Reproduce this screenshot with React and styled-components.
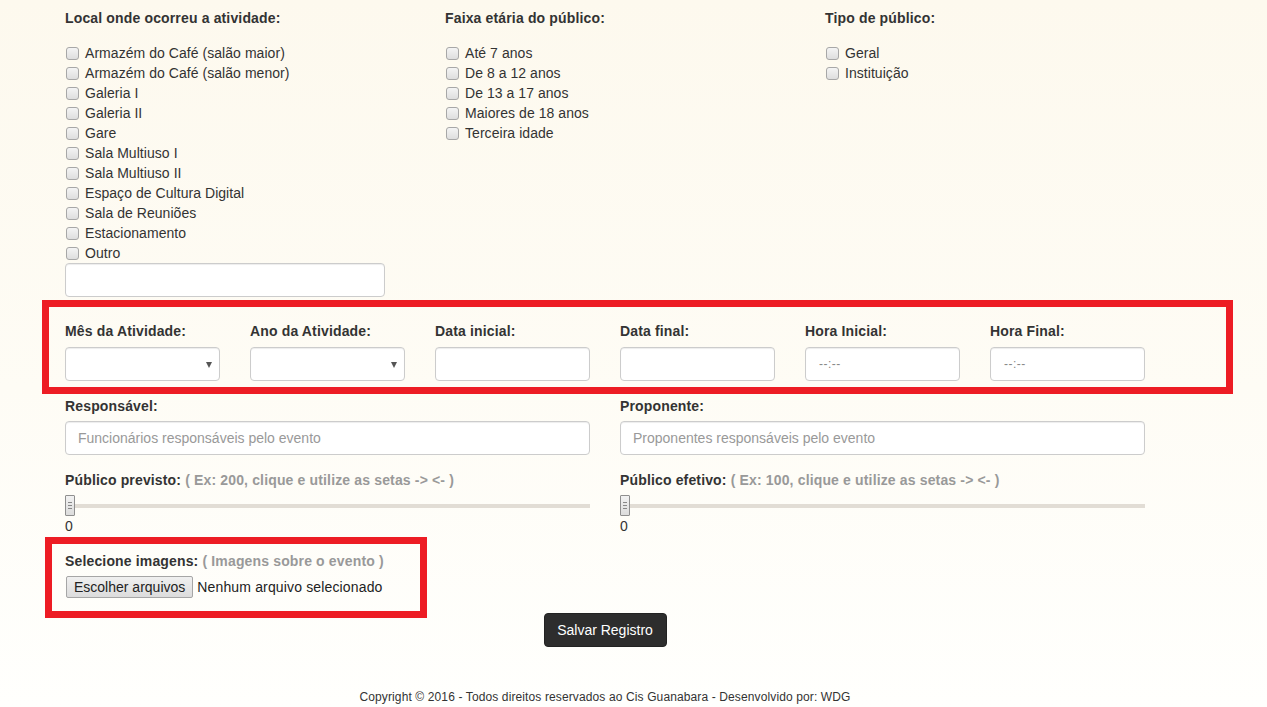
import React from "react";
import styled, { createGlobalStyle } from "styled-components";

const Global = createGlobalStyle`
  html, body { margin: 0; padding: 0; }
  body {
    background: linear-gradient(180deg, #fdf9ee 0%, #fefcf5 55%, #fffffd 100%);
    min-height: 707px;
    font-family: "Liberation Sans", Arial, Helvetica, sans-serif;
    font-size: 14px;
    color: #333;
  }
`;

const Page = styled.div`
  width: 1080px;
  margin-left: 65px;
  padding-top: 8px;
  padding-bottom: 2px;
`;

const TopGrid = styled.div`
  display: grid;
  grid-template-columns: 350px 350px 350px;
  column-gap: 30px;
`;

const Label = styled.div`
  font-weight: bold;
  line-height: 20px;
  letter-spacing: 0.15px;
  margin-bottom: ${(p) => p.$mb ?? 5}px;
  white-space: nowrap;
`;

const Hint = styled.span`
  color: #999;
  font-weight: bold;
`;

const CheckList = styled.div`
  display: flex;
  flex-direction: column;
`;

const CheckItem = styled.label`
  display: flex;
  align-items: center;
  height: 20px;
  line-height: 20px;
  color: #333;
  letter-spacing: 0.05px;
`;

const Box = styled.span`
  width: 13px;
  height: 13px;
  box-sizing: border-box;
  margin-left: 1px;
  margin-right: 6px;
  border: 1px solid #a7a7a7;
  border-radius: 3px;
  background: linear-gradient(180deg, #f4f4f4 0%, #dedede 100%);
  flex: none;
`;

const TextInput = styled.input`
  box-sizing: border-box;
  display: block;
  width: ${(p) => p.$w || "100%"};
  height: 34px;
  padding: 6px 12px;
  border: 1px solid #ccc;
  border-radius: 4px;
  background: #fff;
  font-family: inherit;
  font-size: 14px;
  color: #555;
  box-shadow: inset 0 1px 1px rgba(0, 0, 0, 0.075);
  outline: none;
  &::placeholder { color: #999; }
`;

const TimeInput = styled(TextInput)`
  padding-left: 13px;
  font-size: 12px;
  &::placeholder { color: #888; letter-spacing: 0.5px; }
`;

const SelectBox = styled.div`
  box-sizing: border-box;
  height: 34px;
  border: 1px solid #ccc;
  border-radius: 4px;
  background: #fff;
  box-shadow: inset 0 1px 1px rgba(0, 0, 0, 0.075);
  display: flex;
  align-items: center;
  justify-content: flex-end;
  padding-right: 7px;
`;

const Caret = styled.span`
  width: 0;
  height: 0;
  border-left: 3.5px solid transparent;
  border-right: 3.5px solid transparent;
  border-top: 6px solid #555;
  margin-top: 2px;
`;

const Section = styled.div`
  position: relative;
  margin-top: ${(p) => p.$mt ?? 15}px;
`;

const Highlight = styled.div`
  position: absolute;
  box-sizing: border-box;
  border: 7px solid #ed1c24;
  pointer-events: none;
  top: ${(p) => p.$top}px;
  bottom: ${(p) => p.$bottom}px;
  left: ${(p) => p.$left}px;
  width: ${(p) => p.$width}px;
`;

const SixGrid = styled.div`
  display: grid;
  grid-template-columns: repeat(6, 155px);
  column-gap: 30px;
`;

const TwoGrid = styled.div`
  display: grid;
  grid-template-columns: 525px 525px;
  column-gap: 30px;
`;

const SliderRow = styled.div`
  display: flex;
  align-items: center;
  height: 21px;
  margin-top: 5px;
`;

const Handle = styled.span`
  box-sizing: border-box;
  width: 10px;
  height: 21px;
  border: 1px solid #8f8f8f;
  border-radius: 1px;
  background: linear-gradient(180deg, #f2f2f2, #dcdcdc);
  display: flex;
  flex-direction: column;
  justify-content: center;
  align-items: center;
  gap: 2px;
  flex: none;
  & > i {
    display: block;
    width: 4px;
    height: 1px;
    background: #888;
  }
`;

const Track = styled.span`
  flex: 1;
  height: 4px;
  background: #e2ddd5;
`;

const Value = styled.div`
  line-height: 20px;
  color: #333;
`;

const FileRow = styled.div`
  display: flex;
  align-items: center;
  gap: 4px;
`;

const FileButton = styled.button`
  box-sizing: border-box;
  height: 22px;
  margin-left: 1px;
  padding: 0 7px;
  border: 1px solid #a6a6a6;
  border-radius: 2px;
  background: linear-gradient(180deg, #f0f0f0, #dcdcdc);
  font-family: inherit;
  font-size: 14px;
  color: #222;
`;

const FileText = styled.span`
  color: #222;
  font-size: 14px;
  letter-spacing: 0.15px;
`;

const Actions = styled.div`
  display: flex;
  justify-content: center;
  margin-top: 15px;
`;

const SaveButton = styled.button`
  box-sizing: border-box;
  width: 123px;
  height: 34px;
  border: 1px solid #222;
  border-radius: 4px;
  background: #2d2d2d;
  color: #fff;
  font-family: inherit;
  font-size: 14px;
`;

const Footer = styled.div`
  margin-top: 42px;
  text-align: center;
  font-size: 12px;
  line-height: 16px;
  letter-spacing: 0.12px;
  color: #333;
`;

const locais = [
  "Armazém do Café (salão maior)",
  "Armazém do Café (salão menor)",
  "Galeria I",
  "Galeria II",
  "Gare",
  "Sala Multiuso I",
  "Sala Multiuso II",
  "Espaço de Cultura Digital",
  "Sala de Reuniões",
  "Estacionamento",
  "Outro",
];
const faixas = ["Até 7 anos", "De 8 a 12 anos", "De 13 a 17 anos", "Maiores de 18 anos", "Terceira idade"];
const tipos = ["Geral", "Instituição"];

function Checks({ items }) {
  return (
    <CheckList>
      {items.map((t) => (
        <CheckItem key={t}>
          <Box />
          {t}
        </CheckItem>
      ))}
    </CheckList>
  );
}

function Slider({ label, hint }) {
  return (
    <div>
      <Label $mb={0}>
        {label} <Hint>{hint}</Hint>
      </Label>
      <SliderRow>
        <Handle>
          <i />
          <i />
          <i />
        </Handle>
        <Track />
      </SliderRow>
      <Value>0</Value>
    </div>
  );
}

export default function App() {
  return (
    <>
      <Global />
      <Page>
        <TopGrid>
          <div>
            <Label $mb={15}>Local onde ocorreu a atividade:</Label>
            <Checks items={locais} />
            <TextInput $w="320px" />
          </div>
          <div>
            <Label $mb={15}>Faixa etária do público:</Label>
            <Checks items={faixas} />
          </div>
          <div>
            <Label $mb={15}>Tipo de público:</Label>
            <Checks items={tipos} />
          </div>
        </TopGrid>

        <Section $mt={24}>
          <Highlight $top={-21} $bottom={-13} $left={-23} $width={1191} />
          <SixGrid>
            <div>
              <Label $mb={6}>Mês da Atividade:</Label>
              <SelectBox><Caret /></SelectBox>
            </div>
            <div>
              <Label $mb={6}>Ano da Atividade:</Label>
              <SelectBox><Caret /></SelectBox>
            </div>
            <div>
              <Label $mb={6}>Data inicial:</Label>
              <TextInput />
            </div>
            <div>
              <Label $mb={6}>Data final:</Label>
              <TextInput />
            </div>
            <div>
              <Label $mb={6}>Hora Inicial:</Label>
              <TimeInput placeholder="--:--" />
            </div>
            <div>
              <Label $mb={6}>Hora Final:</Label>
              <TimeInput placeholder="--:--" />
            </div>
          </SixGrid>
        </Section>

        <Section>
          <TwoGrid>
            <div>
              <Label>Responsável:</Label>
              <TextInput placeholder="Funcionários responsáveis pelo evento" />
            </div>
            <div>
              <Label>Proponente:</Label>
              <TextInput placeholder="Proponentes responsáveis pelo evento" />
            </div>
          </TwoGrid>
        </Section>

        <Section>
          <TwoGrid>
            <Slider label="Público previsto:" hint="( Ex: 200, clique e utilize as setas -> <- )" />
            <Slider label="Público efetivo:" hint="( Ex: 100, clique e utilize as setas -> <- )" />
          </TwoGrid>
        </Section>

        <Section>
          <Highlight $top={-14} $bottom={-20} $left={-20} $width={382} />
          <Label>
            Selecione imagens: <Hint>( Imagens sobre o evento )</Hint>
          </Label>
          <FileRow>
            <FileButton type="button">Escolher arquivos</FileButton>
            <FileText>Nenhum arquivo selecionado</FileText>
          </FileRow>
        </Section>

        <Actions>
          <SaveButton type="button">Salvar Registro</SaveButton>
        </Actions>

        <Footer>Copyright © 2016 - Todos direitos reservados ao Cis Guanabara - Desenvolvido por: WDG</Footer>
      </Page>
    </>
  );
}
